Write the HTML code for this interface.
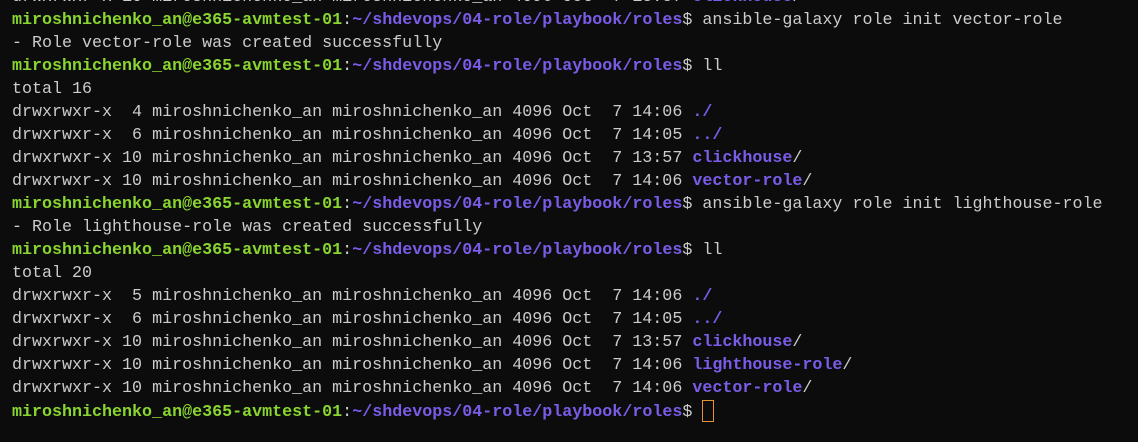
<!DOCTYPE html>
<html><head><meta charset="utf-8"><style>
html,body{margin:0;padding:0;background:#0c0c0c;width:1138px;height:442px;overflow:hidden}
pre{position:absolute;left:12px;top:-14px;margin:0;font-family:"Liberation Mono",monospace;font-size:16.68px;line-height:23px;color:#cccccc;white-space:pre}
.g{color:#8ad630;font-weight:bold}
.p{color:#7a5ce8;font-weight:bold}
.c{display:inline-block;height:22px;border:1.5px solid #e8913a;vertical-align:-6px;box-sizing:border-box;width:12px}
</style></head><body><pre>drwxrwxr-x 10 miroshnichenko_an miroshnichenko_an 4096 Oct  7 13:57 <span class="p">clickhouse</span>/
<span class="g">miroshnichenko_an@e365-avmtest-01</span>:<span class="p">~/shdevops/04-role/playbook/roles</span>$ ansible-galaxy role init vector-role
- Role vector-role was created successfully
<span class="g">miroshnichenko_an@e365-avmtest-01</span>:<span class="p">~/shdevops/04-role/playbook/roles</span>$ ll
total 16
drwxrwxr-x  4 miroshnichenko_an miroshnichenko_an 4096 Oct  7 14:06 <span class="p">./</span>
drwxrwxr-x  6 miroshnichenko_an miroshnichenko_an 4096 Oct  7 14:05 <span class="p">../</span>
drwxrwxr-x 10 miroshnichenko_an miroshnichenko_an 4096 Oct  7 13:57 <span class="p">clickhouse</span>/
drwxrwxr-x 10 miroshnichenko_an miroshnichenko_an 4096 Oct  7 14:06 <span class="p">vector-role</span>/
<span class="g">miroshnichenko_an@e365-avmtest-01</span>:<span class="p">~/shdevops/04-role/playbook/roles</span>$ ansible-galaxy role init lighthouse-role
- Role lighthouse-role was created successfully
<span class="g">miroshnichenko_an@e365-avmtest-01</span>:<span class="p">~/shdevops/04-role/playbook/roles</span>$ ll
total 20
drwxrwxr-x  5 miroshnichenko_an miroshnichenko_an 4096 Oct  7 14:06 <span class="p">./</span>
drwxrwxr-x  6 miroshnichenko_an miroshnichenko_an 4096 Oct  7 14:05 <span class="p">../</span>
drwxrwxr-x 10 miroshnichenko_an miroshnichenko_an 4096 Oct  7 13:57 <span class="p">clickhouse</span>/
drwxrwxr-x 10 miroshnichenko_an miroshnichenko_an 4096 Oct  7 14:06 <span class="p">lighthouse-role</span>/
drwxrwxr-x 10 miroshnichenko_an miroshnichenko_an 4096 Oct  7 14:06 <span class="p">vector-role</span>/
<span class="g">miroshnichenko_an@e365-avmtest-01</span>:<span class="p">~/shdevops/04-role/playbook/roles</span>$ <span class="c"></span></pre></body></html>
